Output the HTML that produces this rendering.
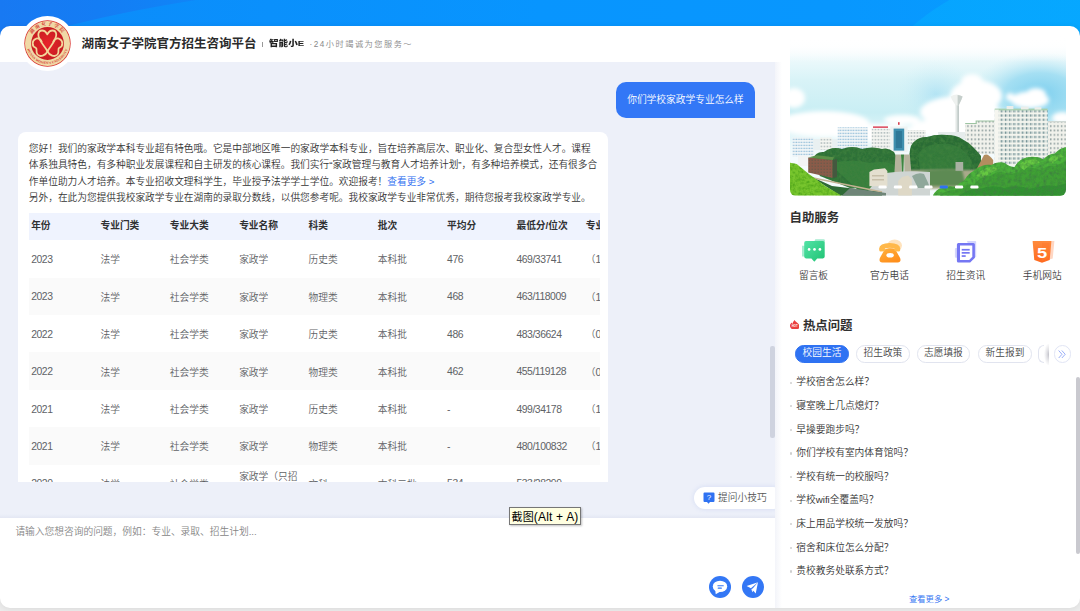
<!DOCTYPE html>
<html lang="zh-CN">
<head>
<meta charset="utf-8">
<title>湖南女子学院官方招生咨询平台</title>
<style>
*{box-sizing:border-box;margin:0;padding:0}
html,body{width:1080px;height:611px;overflow:hidden}
body{position:relative;background:#ececec;font-family:"Liberation Sans","Noto Sans CJK SC",sans-serif;font-size:9.72px;color:#333;font-weight:350;}
#top{position:absolute;left:0;top:0;width:1080px;height:70px;background:linear-gradient(90deg,#0c8bf9 0%,#0a90fc 25%,#0895fe 50%,#0897fe 77%,#079dff 100%);overflow:hidden}
#top .band{position:absolute;left:0;top:0;width:400px;height:60px}
#top .arc{position:absolute;left:833px;top:-30px;width:460px;height:460px;border-radius:50%;background:linear-gradient(90deg,rgba(6,170,255,.6),rgba(6,174,255,.75))}
#panel{position:absolute;left:0;top:26px;width:1080px;height:582px;background:#fff;border-radius:10px;box-shadow:0 1px 6px rgba(0,0,0,.08);}
#chat{position:absolute;left:0;top:62px;width:775px;height:456px;background:#edf0f9;overflow:hidden}
#logo{position:absolute;left:19.6px;top:15.5px;width:55px;height:55px;border-radius:50%;background:#fff}
#title{position:absolute;left:81.4px;top:33.5px;font-size:12.5px;font-weight:700;color:#2b2b2b;line-height:20px;white-space:nowrap;letter-spacing:0}
#sub{position:absolute;left:309.5px;top:36.1px;line-height:18px;font-size:8.2px;color:#888;white-space:nowrap;letter-spacing:1.5px}

#ububble{position:absolute;left:616px;top:20px;width:139px;height:35.5px;background:#3377f6;border-radius:10px 10px 0 10px;color:#fff;font-size:9.72px;line-height:35.5px;text-align:center;white-space:nowrap}
#bot{position:absolute;left:18.25px;top:69.5px;width:589.9px;height:420px;background:#fff;border-radius:8px;padding:9.6px 10.6px 0 10.6px;}
#bot p{font-size:9.7px;line-height:16.2px;color:#333;white-space:nowrap}
#bot p a{color:#2b6cf0;text-decoration:none}
#tblwrap{margin-top:6.6px;width:570.7px;overflow:hidden}
table{border-collapse:collapse;table-layout:fixed;width:693.3px}
th,td{width:69.33px;text-align:left;padding:0 0 0 2.3px;font-size:9.72px;white-space:nowrap;overflow:hidden}
th{height:27.8px;background:#eff3fe;color:#303133;font-weight:700;padding-bottom:2.6px}
td.n,span.n{font-size:10.4px;letter-spacing:-.45px}
td{height:37.4px;color:#606266;padding-top:1px}
td.wrap{white-space:normal;line-height:15.4px;vertical-align:top;padding-top:4.6px}
tr.s td{background:#fafafa}

#scroll{position:absolute;left:0;top:0;width:775px;height:420.3px;overflow:hidden}
#tip{position:absolute;left:693.8px;top:424.9px;width:90px;height:22.5px;border-radius:11.25px;background:#fff;font-size:9.72px;line-height:22.5px;color:#555;padding-left:24.3px;white-space:nowrap;box-shadow:0 0 5px rgba(110,140,225,.2)}
#tip svg{position:absolute;left:8.9px;top:5.4px}
#chat:after{content:"";position:absolute;left:0;bottom:0;width:100%;height:4px;background:linear-gradient(180deg,rgba(225,229,242,0),rgba(225,229,242,.8))}
#ph{position:absolute;left:15.4px;top:523.6px;font-size:9.72px;line-height:16px;color:#858585;white-space:nowrap}
.cbtn{position:absolute;top:575.6px;width:22px;height:22px;border-radius:50%;background:#3377f5}
.cbtn svg{position:absolute;left:0;top:0}
#tooltip{position:absolute;left:509px;top:506.5px;width:72px;height:18.2px;background:#ffffe1;border:1px solid #767676;font-size:12px;font-weight:400;line-height:18.6px;color:#000;text-align:center;white-space:nowrap;letter-spacing:.18px;box-shadow:1px 1px 2px rgba(0,0,0,.25)}
#tooltip span{font-size:11px;position:relative;top:.3px}

#side{position:absolute;left:775px;top:27px;width:305px;height:581px;overflow:hidden;border-radius:0 10px 10px 0}
#photo{position:absolute;left:14.5px;top:9px;width:276.5px;height:159.5px;border-radius:6px;overflow:hidden}
.h{position:absolute;font-size:12.4px;font-weight:700;color:#303030;line-height:18px;white-space:nowrap}
.svc{position:absolute;top:211.6px;width:60px;text-align:center;font-size:9.72px;color:#444;line-height:14px}
.svc svg{display:block;margin:0 auto 6.3px auto}
.tab{position:absolute;top:318.2px;height:17.4px;width:53.6px;border-radius:8.7px;border:0.8px solid #e1e4ef;background:#fff;color:#444;font-size:9.7px;line-height:14.6px;text-align:center;white-space:nowrap}
.tab.on{background:#2f72f2;border-color:#2f72f2;color:#fff}
#more{position:absolute;left:278.6px;top:318.2px;width:17.4px;height:17.4px;border-radius:50%;border:0.8px solid #e1e5f5;background:#fff}
#more svg{position:absolute;left:3.9px;top:3.7px}
#tab5{position:absolute;left:263.2px;top:318.2px;width:6px;height:17.4px;border:0.8px solid #e1e4ef;border-right:0;border-radius:8.7px 0 0 8.7px;background:#fff}
#fade{position:absolute;left:268.6px;top:316.5px;width:5.2px;height:21px;background:radial-gradient(ellipse 100% 55% at 100% 50%,rgba(140,140,155,.55),rgba(140,140,155,.25) 45%,rgba(140,140,155,0) 100%)}
#fade:after{content:"";position:absolute;left:5.2px;top:0;width:4px;height:21px;background:#fff}
ul{list-style:none;position:absolute;left:14.5px;top:343.4px}
li{height:23.6px;line-height:23.6px;font-size:9.72px;color:#333;white-space:nowrap;padding-left:6.8px;position:relative}
li:before{content:"";position:absolute;left:0;top:11.2px;width:2.2px;height:2.2px;border-radius:50%;background:#cfcfcf}
#seemore{position:absolute;left:134px;top:564.5px;font-size:8.3px;color:#2f72f2;line-height:14px;white-space:nowrap}
#sb1{position:absolute;left:1075.6px;top:376.8px;width:4px;height:177px;background:#c9c9cf;border-radius:2px}
#sb2{position:absolute;left:770.4px;top:345.7px;width:4.2px;height:92.6px;background:#cfd3df;border-radius:2.1px}

#sep{position:absolute;left:262.2px;top:41.600px;width:.8px;height:5.200px;background:#999}
#xe{position:absolute;left:269px;top:35.4px;font-size:8px;font-weight:900;color:#222;line-height:18px;white-space:nowrap;letter-spacing:0;transform:scaleX(1.2);transform-origin:0 0}
#flame{position:absolute;left:14.600px;top:292.600px}
#side:before{content:"";position:absolute;left:0;top:35px;width:7px;height:546px;background:linear-gradient(90deg,rgba(170,180,215,.14),rgba(170,180,215,0))}
</style>
</head>
<body>
<div id="top"><svg class="band" width="400" height="60" viewBox="0 0 400 60"><defs><linearGradient id="bd" x1="0" y1="0" x2="1" y2="0"><stop offset="0" stop-color="#1879f2"/><stop offset=".5" stop-color="#147df4"/><stop offset="1" stop-color="#1085f7"/></linearGradient></defs><path d="M0 0H196Q120 12 60 28L0 60z" fill="url(#bd)"/></svg><div class="arc"></div></div>
<div id="panel"></div>
<div id="chat">
<div id="scroll">
<div id="ububble">你们学校家政学专业怎么样</div>
<div id="bot">
<p>您好！我们的家政学本科专业超有特色哦。它是中部地区唯一的家政学本科专业，旨在培养高层次、职业化、复合型女性人才。课程</p>
<p>体系独具特色，有多种职业发展课程和自主研发的核心课程。我们实行“家政管理与教育人才培养计划”，有多种培养模式，还有很多合</p>
<p>作单位助力人才培养。本专业招收文理科学生，毕业授予法学学士学位。欢迎报考！<a>查看更多 &gt;</a></p>
<p>另外，在此为您提供我校家政学专业在湖南的录取分数线，以供您参考呢。我校家政学专业非常优秀，期待您报考我校家政学专业。</p>
<div id="tblwrap"><table><tr><th>年份</th><th>专业门类</th><th>专业大类</th><th>专业名称</th><th>科类</th><th>批次</th><th>平均分</th><th>最低分/位次</th><th>专业备注</th><th>计划数</th></tr>
<tr><td class="n">2023</td><td>法学</td><td>社会学类</td><td>家政学</td><td>历史类</td><td>本科批</td><td class="n">476</td><td class="n">469/33741</td><td>（<span class="n">1</span></td><td></td></tr>
<tr class="s"><td class="n">2023</td><td>法学</td><td>社会学类</td><td>家政学</td><td>物理类</td><td>本科批</td><td class="n">468</td><td class="n">463/118009</td><td>（<span class="n">1</span></td><td></td></tr>
<tr><td class="n">2022</td><td>法学</td><td>社会学类</td><td>家政学</td><td>历史类</td><td>本科批</td><td class="n">486</td><td class="n">483/36624</td><td>（<span class="n">0</span></td><td></td></tr>
<tr class="s"><td class="n">2022</td><td>法学</td><td>社会学类</td><td>家政学</td><td>物理类</td><td>本科批</td><td class="n">462</td><td class="n">455/119128</td><td>（<span class="n">0</span></td><td></td></tr>
<tr><td class="n">2021</td><td>法学</td><td>社会学类</td><td>家政学</td><td>历史类</td><td>本科批</td><td class="n">-</td><td class="n">499/34178</td><td>（<span class="n">1</span></td><td></td></tr>
<tr class="s"><td class="n">2021</td><td>法学</td><td>社会学类</td><td>家政学</td><td>物理类</td><td>本科批</td><td class="n">-</td><td class="n">480/100832</td><td>（<span class="n">1</span></td><td></td></tr>
<tr><td class="n">2020</td><td>法学</td><td>社会学类</td><td class="wrap">家政学（只招文科）</td><td>文科</td><td>本科二批</td><td class="n">534</td><td class="n">533/28299</td><td></td><td></td></tr>
</table></div>
</div>
</div>
<div id="tip"><svg width="12" height="12" viewBox="0 0 24 24"><path d="M3 1h18a2 2 0 0 1 2 2v15a2 2 0 0 1-2 2h-7l-3 3.5L8 20H3a2 2 0 0 1-2-2V3a2 2 0 0 1 2-2z" fill="#2f72f2"/><text x="12" y="16.5" font-size="16" font-weight="400" text-anchor="middle" fill="#fff" font-family="Liberation Sans, sans-serif">?</text></svg>提问小技巧</div>
</div>
<div id="ph">请输入您想咨询的问题，例如：专业、录取、招生计划...</div>
<div class="cbtn" style="left:709.2px"><svg width="22" height="22" viewBox="0 0 22 22"><ellipse cx="11" cy="10.4" rx="7.2" ry="5.7" fill="#fff"/><path d="M6.2 13.5L6.7 18.2L11.5 15.6z" fill="#fff"/><rect x="8.3" y="9.2" width="6.5" height="1.15" rx=".5" fill="#3377f5"/><rect x="8.7" y="11.6" width="4.2" height="1.05" rx=".5" fill="#3377f5"/></svg></div>
<div class="cbtn" style="left:741.8px"><svg width="22" height="22" viewBox="0 0 22 22"><path d="M16 6.2L4.6 9.9L8.9 12.3z" fill="#fff"/><path d="M16 6.2L10.1 13.2L13.7 17.6z" fill="#fff"/><path d="M9.3 12.9L10.3 16.2L11.9 14.2L10.6 12.4z" fill="#fff" opacity=".9"/></svg></div>
<div id="tooltip"><span>截图</span>(Alt + A)</div>
<div id="side">
<div id="photo"><svg width="276.5" height="159.5" viewBox="0 0 276.5 159.5">
<defs>
<linearGradient id="sky" x1="0" y1="0" x2="0" y2="1">
<stop offset="0" stop-color="#ffffff"/><stop offset=".1" stop-color="#f3fbfd"/><stop offset=".28" stop-color="#d8f3f7"/><stop offset=".48" stop-color="#c9eef4"/><stop offset=".62" stop-color="#e2f6f9"/><stop offset=".75" stop-color="#f4fbfd"/><stop offset="1" stop-color="#f4fbfd"/>
</linearGradient>
<radialGradient id="blue" cx="0" cy="0" r="1" gradientUnits="userSpaceOnUse" gradientTransform="translate(250 58) scale(70 42)">
<stop offset="0" stop-color="#78cdee" stop-opacity=".95"/><stop offset=".5" stop-color="#92d8f1" stop-opacity=".75"/><stop offset="1" stop-color="#c9ecf6" stop-opacity="0"/>
</radialGradient>
<radialGradient id="blue2" cx="0" cy="0" r="1" gradientUnits="userSpaceOnUse" gradientTransform="translate(146 58) scale(40 34)">
<stop offset="0" stop-color="#8fd5f2" stop-opacity=".45"/><stop offset="1" stop-color="#c9ecf6" stop-opacity="0"/>
</radialGradient>
<linearGradient id="topfade" x1="0" y1="0" x2="0" y2="1"><stop offset="0" stop-color="#fff"/><stop offset=".4" stop-color="#fff" stop-opacity=".9"/><stop offset="1" stop-color="#fff" stop-opacity="0"/></linearGradient>
<filter id="b2" x="-20%" y="-20%" width="140%" height="140%"><feGaussianBlur stdDeviation="2"/></filter>
<filter id="b1" x="-20%" y="-20%" width="140%" height="140%"><feGaussianBlur stdDeviation="1"/></filter>
<filter id="b05" x="-10%" y="-10%" width="120%" height="120%"><feGaussianBlur stdDeviation=".5"/></filter>
<filter id="tex" x="0" y="0" width="100%" height="100%"><feTurbulence type="fractalNoise" baseFrequency=".35" numOctaves="2" seed="4" result="n"/><feColorMatrix in="n" type="matrix" values="0 0 0 0 0  0 0 0 0 .25  0 0 0 0 0  .9 .9 0 0 -.75" result="m"/><feComposite in="m" in2="SourceGraphic" operator="in" result="d"/><feMerge><feMergeNode in="SourceGraphic"/><feMergeNode in="d"/></feMerge></filter>
<filter id="tex2" x="0" y="0" width="100%" height="100%"><feTurbulence type="fractalNoise" baseFrequency=".28" numOctaves="2" seed="7" result="n"/><feColorMatrix in="n" type="matrix" values="0 0 0 0 .05  0 0 0 0 .22  0 0 0 0 .05  1.4 1.4 0 0 -1.15" result="m"/><feComposite in="m" in2="SourceGraphic" operator="in" result="d"/><feMerge><feMergeNode in="SourceGraphic"/><feMergeNode in="d"/></feMerge></filter>
<pattern id="win" width="4.2" height="4.3" patternUnits="userSpaceOnUse"><rect width="4.2" height="4.3" fill="#f4f5ee"/><rect x=".6" y="1" width="1.5" height="2.2" fill="#6f8e92"/><rect x="2.5" y="1" width="1" height="2.2" fill="#b9cbcb"/></pattern>
<pattern id="win2" width="3.6" height="4.4" patternUnits="userSpaceOnUse"><rect width="3.6" height="4.4" fill="#f1f2ec"/><rect x=".8" y="1.2" width="1.5" height="1.8" fill="#8c9c9c"/></pattern>
<pattern id="win3" width="2.6" height="3" patternUnits="userSpaceOnUse"><rect width="2.6" height="3" fill="#f3f7f8"/><rect x=".4" y=".7" width="1.6" height="1.4" fill="#9cc3dc"/></pattern>
<pattern id="win4" width="3" height="3.4" patternUnits="userSpaceOnUse"><rect width="3" height="3.4" fill="#f4f5f1"/><rect x=".6" y=".9" width="1.7" height="1.5" fill="#b4bfc0"/></pattern>
<pattern id="brick" width="3" height="3" patternUnits="userSpaceOnUse"><rect width="3" height="3" fill="#8a5b49"/><rect x=".5" y=".6" width="1.4" height="1.3" fill="#6b5a4a"/></pattern>
</defs>
<rect width="276.5" height="159.5" fill="url(#sky)"/>
<rect width="276.5" height="159.5" fill="url(#blue)"/><rect width="276.5" height="159.5" fill="url(#blue2)"/>
<rect width="276.5" height="26" fill="url(#topfade)"/>
<!-- clouds -->
<g filter="url(#b2)" fill="#fff">
<ellipse cx="186" cy="60" rx="26" ry="16"/><ellipse cx="170" cy="76" rx="40" ry="16"/><ellipse cx="205" cy="84" rx="22" ry="10"/><ellipse cx="160" cy="92" rx="40" ry="10"/><ellipse cx="182" cy="46" rx="11" ry="8"/>
<ellipse cx="240" cy="64" rx="19" ry="8.500"/><ellipse cx="246" cy="58" rx="10" ry="6"/><ellipse cx="220" cy="61" rx="4" ry="4"/>
<ellipse cx="272" cy="82" rx="10" ry="6"/>
<ellipse cx="112" cy="84" rx="18" ry="5"/><ellipse cx="34" cy="88" rx="46" ry="13"/><ellipse cx="4" cy="62" rx="11" ry="10"/><ellipse cx="84" cy="97" rx="44" ry="9"/>
</g>
<!-- far buildings left -->
<rect x="2.400" y="101.400" width="21" height="19" fill="url(#win3)"/>
<rect x="23.300" y="103" width="24.400" height="11" fill="#e9f0f1"/><rect x="30" y="101.500" width="12" height="12" fill="url(#win4)"/>
<rect x="8" y="120" width="10" height="10" fill="#f2f4f4"/>
<rect x="47.700" y="91.300" width="30.300" height="22.600" fill="url(#win3)"/>
<rect x="81.600" y="92.600" width="18.700" height="20.600" fill="url(#win4)"/><rect x="83" y="90.300" width="15" height="1.700" fill="#de5a6c"/>
<rect x="100.300" y="90.400" width="17.300" height="25.600" fill="#eef3f3"/><rect x="103.600" y="92.600" width="10.600" height="22" fill="#3f8fae"/><rect x="105.800" y="95" width="6.200" height="17" fill="#2f7898"/><rect x="108" y="86.200" width="1.600" height="2.600" fill="#d8404f"/>
<rect x="117.600" y="94" width="18" height="15" fill="url(#win4)"/>
<!-- tower -->
<rect x="165.500" y="68" width="3.300" height="33" fill="#e3e8e6"/><rect x="167.500" y="68" width="1.300" height="33" fill="#b9c3c1"/>
<path d="M160.700 60.600Q166.600 56.600 172.600 60.600L171.600 63.200Q169.600 67.600 168.800 69.200H165.500Q164.600 67.600 161.700 63.200z" fill="#eef1ef"/><path d="M167.600 59v10l1.200 .2q.8-1.600 2.800-6l1-2.600q-2.400-1.500-5-1.600z" fill="#c5cecb"/>
<!-- right buildings -->
<rect x="148" y="96" width="28" height="7" fill="#e6ecec"/>
<rect x="175.200" y="87.500" width="11" height="30" fill="url(#win2)"/><rect x="186.200" y="85" width="18.500" height="33" fill="url(#win2)"/><path d="M175.200 87.500h11v-2.500h18.500" stroke="#9dc4a2" stroke-width="1.200" fill="none"/>
<rect x="257.600" y="86" width="19" height="36" fill="url(#win2)"/><rect x="257.600" y="85" width="19" height="1.300" fill="#cfd8d4"/>
<rect x="204.700" y="73.600" width="52.900" height="56" fill="url(#win)"/><rect x="204.700" y="72.600" width="52.900" height="1.800" fill="#a7cfae"/>
<rect x="216.600" y="70" width="6.800" height="3.200" fill="#eceeea"/><rect x="231" y="70.600" width="7.600" height="2.800" fill="#eceeea"/><rect x="244.600" y="71.200" width="6.800" height="2.400" fill="#eceeea"/>
<rect x="204.700" y="73.600" width="4" height="56" fill="#f6f6f0"/>
<!-- dark trees -->
<g filter="url(#tex2)"><g filter="url(#b05)">
<path d="M22 124Q26 115 34 116Q42 110 52 113Q62 109 72 113Q82 110 92 113Q98 111 104 116L106 120V150L60 152L30 140z" fill="#2f7139"/>
<path d="M119.5 118Q120 108 125 105Q130 100.5 137 101Q146 98 157 99Q166 99 172 103Q178 106 183 111Q188 116 191 120V136H119.5z" fill="#2c6c35"/><path d="M128 118Q136 108 148 108Q160 106 170 112Q178 118 182 126L180 134H130z" fill="#357a3b"/>
<path d="M40 128Q60 122 80 127Q96 124 106 130V156H70z" fill="#37803d"/>
</g></g>
<!-- ground right-mid -->
<path d="M120 134H196V153H120z" fill="#a9a98a" filter="url(#b1)"/>
<path d="M128 136Q150 131 172 134L176 150H132z" fill="#5d8a52" filter="url(#b1)"/>
<rect x="165.500" y="126" width="7.700" height="8.800" fill="#a9b1a2"/>
<path d="M185.800 134.800L194 119Q198 116.600 203.200 124V134.800z" fill="#b38d5e" filter="url(#b05)"/>
<!-- stairs -->
<path d="M105.400 118.600h5.600l1 18.800h-7.600z" fill="#b5b39d"/><path d="M114 118.600h5.800l1.600 18.800h-7z" fill="#b5b39d"/><path d="M111 118.600h3l-.6 18.800h-1.400z" fill="#3f8540"/>
<!-- road / plaza -->
<path d="M92 138Q110 134 140 136V159.500H74z" fill="#cfd5d3" filter="url(#b05)"/>
<path d="M122 140Q128 136 134 138Q138 146 140 152H128z" fill="#8fa79a"/>
<!-- hedge + road bottom middle -->
<path d="M20 140L42 150L92 156V159.500H50z" fill="#2f6b36"/>
<path d="M21 141.500L92 156" stroke="#c4b393" stroke-width="1.600" fill="none"/>
<path d="M52 159.5L60 152L96 157V159.5z" fill="#6f8578"/>
<!-- brick building -->
<path d="M18.200 121.500L42.700 124V142L18.200 136.500z" fill="url(#brick)"/><path d="M18.200 121.500L27 119.300L44 121.300L42.700 124z" fill="#5b9148"/><path d="M42.700 124L47 123V141L42.700 142z" fill="#44583f"/>
<!-- grass hill -->
<path d="M-1 126.600L6.700 128L18.200 137.400L35.500 150.300L51.300 159.500H-1z" fill="#77c52e" filter="url(#tex)"/>
<!-- monuments -->
<path d="M79.400 136L84 133.500L95 132.300L97.400 135V150.300H79.400z" fill="#e4dfcf"/><path d="M82 139h12v1.400H82zM82 143h12v1.400H82z" fill="#c7bfa9"/>
<path d="M108.200 145L112 141L118 139.500L121.900 143V159.500H108.200z" fill="#ded8c6"/>
<!-- bright trees -->
<g filter="url(#tex2)"><g filter="url(#b05)">
<path d="M143 159.500Q146 153 152 152Q158 149 166 151Q170 146 174.200 144.400Q178 138 183.800 134.800Q192 128 201.200 129Q208 125 214.700 127Q220 131 224.400 130.900Q230 122 237.900 121.200Q246 120 253.400 123.200Q258 118 264.900 117.400Q270 112 277 111V159.500z" fill="#4bb23a"/>
<path d="M150 159.500Q156 154 166 154Q174 148 184 149Q190 140 200 140Q208 134 216 137Q224 140 232 133Q242 130 250 134Q258 129 266 130Q272 126 277 125V159.500z" fill="#3fa035"/>
<path d="M186 140Q192 132 200 131Q206 130 208 134Q200 136 194 142zM228 130Q234 123 242 123Q248 123 250 127Q240 128 234 134zM258 124Q262 119 270 118L274 121Q266 123 262 128z" fill="#66c943"/>
<path d="M170 159.500Q178 152 190 153Q202 148 214 152Q228 148 240 153Q254 148 266 150L277 147V159.500z" fill="#339232"/>
</g></g>
<!-- dots -->
<g fill="#fff"><rect x="88.500" y="149.600" width="8.200" height="3" rx="1.300"/><rect x="103.800" y="149.600" width="8.200" height="3" rx="1.300"/><rect x="119.100" y="149.600" width="8.200" height="3" rx="1.300"/><rect x="134.400" y="149.600" width="8.200" height="3" rx="1.300"/><rect x="149.700" y="149.600" width="8.200" height="3" rx="1.300" fill="#2f72f2"/><rect x="165" y="149.600" width="8.200" height="3" rx="1.300"/><rect x="180.300" y="149.600" width="8.200" height="3" rx="1.300"/></g>
</svg></div>
<div class="h" style="left:14.6px;top:182.2px">自助服务</div>
<div class="svc" style="left:8.5px"><svg width="24" height="24" viewBox="0 0 24 24"><defs><linearGradient id="g1" x1="0" y1="0" x2="1" y2="1"><stop offset="0" stop-color="#52e3a6"/><stop offset="1" stop-color="#1fc273"/></linearGradient></defs><rect x="-.6" y="6.800" width="4" height="10.800" rx="1" fill="#a5ecd0"/><rect x="12.800" y=".200" width="10" height="4" rx="1" fill="#a5ecd0"/><path d="M4 2.100h16.900a1.800 1.800 0 0 1 1.800 1.800v13.700a1.800 1.800 0 0 1-1.800 1.800h-5.700l-2.600 3-.5.100-2.700-3.100H4a1.800 1.800 0 0 1-1.800-1.800V3.900A1.800 1.800 0 0 1 4 2.100z" fill="url(#g1)"/><circle cx="7.100" cy="10.400" r="1.350" fill="#fff"/><circle cx="12.500" cy="10.400" r="1.350" fill="#fff"/><circle cx="17.900" cy="10.400" r="1.350" fill="#fff"/></svg>留言板</div>
<div class="svc" style="left:84.5px"><svg width="24" height="24" viewBox="0 0 24 24"><defs><linearGradient id="g2" x1="0" y1="0" x2=".6" y2="1"><stop offset="0" stop-color="#ffb23e"/><stop offset="1" stop-color="#ff8f1c"/></linearGradient></defs><ellipse cx="16.600" cy="6.400" rx="7.400" ry="6" fill="#ffe3bd"/><path d="M6.6 10.5q5.4-2.4 10.8 0l4.7 8.6q1.4 4.3-2.4 4.3H4.3q-3.8 0-2.4-4.3z" fill="url(#g2)"/><path d="M1.100 9.800q.4-5.600 10.600-5.700 10.200.1 10.600 5.700l-.2 1.700q-.2 1.200-1.500 1.100l-3.200-.4q-1.100-.2-1-1.300l.1-1.500q-4.800-1.400-9.600 0l.1 1.500q.1 1.100-1 1.300l-3.200.4q-1.300.1-1.500-1.100z" fill="#ffb84a"/><ellipse cx="12.100" cy="16.300" rx="3.700" ry="2.300" fill="#fff"/></svg>官方电话</div>
<div class="svc" style="left:160.7px"><svg width="24" height="24" viewBox="0 0 24 24"><path d="M13 2.100h8.200a1 1 0 0 1 1 1v14.500l-3 3z" fill="#d5d6fc"/><rect x=".9" y="9" width="4" height="9.700" rx="1" fill="#d5d6fc"/><path d="M4.400 4.100h15a1.500 1.500 0 0 1 1.500 1.500v13.100l-4.700 4.700H4.400a1.500 1.500 0 0 1-1.500-1.500V5.600a1.500 1.500 0 0 1 1.500-1.500z" fill="#7577f3"/><path d="M6 6.600h12.300v11.200l-3.100 3.100H6z" fill="#fff"/><rect x="7.700" y="9.900" width="8" height="1.700" fill="#7577f3"/><rect x="7.700" y="13" width="8" height="1.700" fill="#7577f3"/><rect x="7.700" y="16.200" width="4" height="1.700" fill="#7577f3"/></svg>招生资讯</div>
<div class="svc" style="left:237.3px"><svg width="24" height="24" viewBox="0 0 24 24" overflow="visible"><defs><linearGradient id="g4" x1="0" y1="0" x2="0" y2="1"><stop offset="0" stop-color="#ff8b3d"/><stop offset="1" stop-color="#ff6a1f"/></linearGradient></defs><path d="M6 2.100h18.400l-1.700 17.500-7 2z" fill="#ffd6c2"/><path d="M2.600 2.100h18.800l-1.700 19-7.700 2.700-7.700-2.700z" fill="url(#g4)"/><path d="M12 4v17.800l6.100-2.100 1.400-15.700z" fill="#ff7a2c" opacity=".55"/><text x="10.2" y="18.9" font-size="15.5" font-weight="700" text-anchor="middle" fill="#fff" font-family="Liberation Sans, sans-serif" transform="scale(1.18 1)">5</text></svg>手机网站</div>
<svg id="flame" width="9.6" height="9.9" viewBox="0 0 19.2 19.8"><path d="M9 0C11 3.5 15.5 5 17.8 8.8C19.6 11.6 19.4 14.6 17.8 16.6C15.8 18.8 13 19.8 9.6 19.8C4.4 19.8 0 16.4 0 11.6C0 8.600 1.4 6.6 3.6 4.8C3.8 6 4.3 7 5.2 7.8C5.2 4.6 7.4 2.4 9 0z" fill="#ea4040"/><text x="9.6" y="15" font-size="5.6" font-weight="700" text-anchor="middle" fill="#fff" font-family="Liberation Sans, sans-serif">HOT</text></svg>
<div class="h" style="left:27.900px;top:290px">热点问题</div>
<div class="tab on" style="left:20.2px">校园生活</div>
<div class="tab" style="left:81.1px">招生政策</div>
<div class="tab" style="left:141.6px">志愿填报</div>
<div class="tab" style="left:203.2px">新生报到</div>
<div id="tab5"></div>
<div id="fade"></div>
<div id="more"><svg width="8" height="8.6" viewBox="0 0 8 8.6" fill="none" stroke="#8fa6f7" stroke-width=".9"><path d="M.6.5L4 4.3L.6 8.100"/><path d="M3.800.5L7.200 4.300L3.800 8.100"/></svg></div>
<ul>
<li>学校宿舍怎么样？</li>
<li>寝室晚上几点熄灯？</li>
<li>早操要跑步吗？</li>
<li>你们学校有室内体育馆吗？</li>
<li>学校有统一的校服吗？</li>
<li>学校wifi全覆盖吗？</li>
<li>床上用品学校统一发放吗？</li>
<li>宿舍和床位怎么分配？</li>
<li>贵校教务处联系方式？</li>
</ul>
<div id="seemore">查看更多 &gt;</div>
</div>
<div id="sb1"></div><div id="sb2"></div>
<div id="logo"><svg width="55" height="55" viewBox="-27.5 -27.5 55 55" style="position:absolute;left:-.1px;top:.3px"><defs><radialGradient id="lg" cx="0" cy="0" r="16.500" gradientUnits="userSpaceOnUse"><stop offset="0" stop-color="#e8242a"/><stop offset="1" stop-color="#c61c22"/></radialGradient><path id="arcT" d="M-17.800 3.500A18.150 18.150 0 1 1 17.800 3.500"/><path id="arcB" d="M-20.800 2.500A21 21 0 0 0 20.800 2.500"/></defs>
<circle r="23.200" fill="#d9332f"/><circle r="22.500" fill="#f0d9a6"/><circle r="16.400" fill="url(#lg)"/>
<text font-size="4.600" font-weight="700" fill="#d3302c" font-family="Noto Serif CJK SC, serif" letter-spacing="1.600"><textPath href="#arcT" startOffset="50%" text-anchor="middle">湖南女子学院</textPath></text>
<text font-size="3.300" font-weight="700" fill="#d3302c" font-family="Liberation Serif, serif" letter-spacing=".1"><textPath href="#arcB" startOffset="50%" text-anchor="middle">HUNAN WOMEN'S UNIVERSITY</textPath></text>
<g fill="none" stroke="#f3d69a" stroke-width="1.700" transform="scale(1.04)" stroke-linecap="round" stroke-linejoin="round">
<path d="M0 7.500C-2.500 2.500-9.500-3.500-8.800-9C-8.200-13.600-2.800-13.800-.2-8.800C2.400-13.800 7.800-13.600 8.400-9C9.100-3.500 2.500 2.500 0 7.500z"/>
<path d="M0 7.500C-1.800 11.500-7 13.500-9.600 10.600C-11.800 8-9.400 5.600-11.200 4.200C-15.400 2.800-15.200-3.200-11-4.600C-8.400-5.400-6.600-3.800-5.600-1.800"/>
<path d="M0 7.500C1.800 11.500 7 13.500 9.600 10.600C11.800 8 9.400 5.600 11.200 4.200C15.400 2.800 15.200-3.200 11-4.600C8.400-5.400 6.600-3.800 5.600-1.800"/>
</g></svg></div>
<div id="title">湖南女子学院官方招生咨询平台</div>
<div id="sep"></div>
<div id="xe">智能小E</div>
<div id="sub">·24小时竭诚为您服务～</div>
</body>
</html>
